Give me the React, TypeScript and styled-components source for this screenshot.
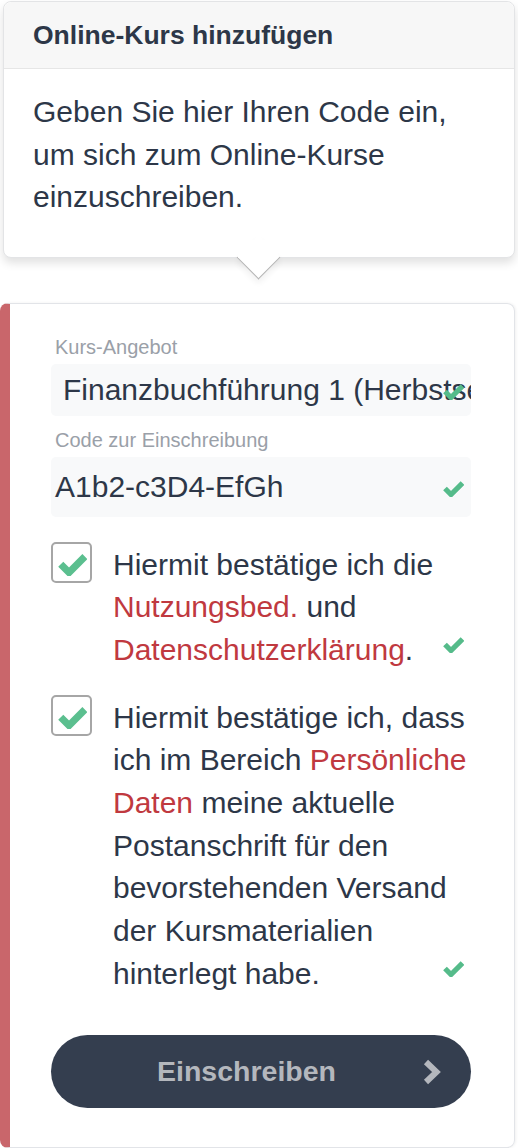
import React from 'react';
import styled, { createGlobalStyle } from 'styled-components';

const GlobalStyle = createGlobalStyle`
  html, body {
    margin: 0;
    padding: 0;
    background: #ffffff;
  }
  body {
    font-family: "Liberation Sans", Arial, Helvetica, sans-serif;
    color: #2d3748;
  }
`;

// thick check mark, as in the reference (butt ends, mitred corner)
const CheckMark: React.FC<{ className?: string }> = ({ className }) => (
  <svg className={className} viewBox="0 0 21 18" fill="none" aria-hidden>
    <path
      d="M2 9.5 L8 15.5 L19.5 4"
      stroke="currentColor"
      strokeWidth={5.2}
      strokeLinecap="butt"
      strokeLinejoin="miter"
    />
  </svg>
);

const Chevron: React.FC<{ className?: string }> = ({ className }) => (
  <svg className={className} viewBox="0 0 22 26" fill="none" aria-hidden>
    <path
      d="M5 3 L15.5 13 L5 23"
      stroke="currentColor"
      strokeWidth={6}
      strokeLinecap="butt"
      strokeLinejoin="miter"
    />
  </svg>
);

const Page = styled.div`
  display: flex;
  flex-direction: column;
  width: 518px;
  height: 1148px;
  overflow: hidden;
  box-sizing: border-box;
  padding-top: 1px;
`;

const Popover = styled.div`
  position: relative;
  margin: 0 3px;
  border: 1px solid #e3e4e6;
  border-radius: 8px;
  background: #ffffff;
  box-shadow: 0 5px 10px rgba(0, 0, 0, 0.12);
`;

const PopoverHeader = styled.div`
  height: 66px;
  display: flex;
  align-items: center;
  padding-left: 29px;
  background: #f7f7f7;
  border-bottom: 1px solid #e6e6e6;
  border-radius: 8px 8px 0 0;
  font-size: 26.5px;
  font-weight: 700;
  color: #2d3748;
`;

const PopoverBody = styled.p`
  margin: 0;
  padding: 22px 60px 38px 29px;
  font-size: 30px;
  line-height: 42.5px;
  color: #2d3748;
`;

const Arrow = styled.div`
  position: absolute;
  left: 239px;
  bottom: -16px;
  width: 30px;
  height: 30px;
  background: #ffffff;
  border-right: 1px solid #b4b4b4;
  border-bottom: 1px solid #b4b4b4;
  transform: rotate(45deg);
  box-shadow: 3px 3px 6px rgba(0, 0, 0, 0.06);
`;

const ArrowCover = styled.div`
  position: absolute;
  left: 234px;
  bottom: -1px;
  width: 40px;
  height: 18px;
  background: #ffffff;
`;

const Card = styled.form`
  margin: 45px 3px 0 0;
  flex: 1;
  display: flex;
  flex-direction: column;
  border: 1px solid #e2e4e8;
  border-left: 10px solid #c9666b;
  border-radius: 8px;
  box-shadow: 1px 0 3px rgba(0, 0, 0, 0.06);
  padding: 31px 43px 0 41px;
`;

const Label = styled.label`
  display: block;
  padding-left: 4px;
  font-size: 20px;
  line-height: 24px;
  color: #9aa0a8;
  margin-bottom: 5px;
`;

const FieldBox = styled.div<{ $tall?: boolean }>`
  position: relative;
  display: flex;
  align-items: center;
  height: ${(p) => (p.$tall ? 60 : 52)}px;
  padding: 0 ${(p) => (p.$tall ? 4 : 12)}px;
  margin-bottom: 12px;
  background: #f8f9fa;
  border-radius: 5px;
  overflow: hidden;
  font-size: 30px;
  color: #2d3748;
  white-space: nowrap;
`;

const ValidIcon = styled(CheckMark)`
  position: absolute;
  right: 7px;
  top: 50%;
  margin-top: -8px;
  width: 21px;
  height: 18px;
  color: #55bb8a;
`;

const ConsentRow = styled.div`
  position: relative;
  display: flex;
  align-items: flex-start;
  gap: 21px;
  margin-top: 15px;
  margin-bottom: 10px;
`;

const CheckBox = styled.span`
  flex: none;
  display: flex;
  align-items: center;
  justify-content: center;
  box-sizing: border-box;
  width: 41px;
  height: 41px;
  margin-top: -2px;
  border: 2px solid #a6a6a6;
  border-radius: 5px;
  color: #5bbf8f;
`;

const BoxCheck = styled(CheckMark)`
  flex: none;
  width: 29px;
  height: 25px;
  margin: 3px 0 0 1px;
`;

const ConsentText = styled.p`
  flex: none;
  margin: 0;
  width: 362px;
  font-size: 30px;
  line-height: 42.7px;
  color: #2d3748;
`;

const TextLink = styled.a`
  color: #c0393f;
  text-decoration: none;
`;

const RowCheck = styled(CheckMark)`
  position: absolute;
  right: 7px;
  bottom: 19px;
  width: 21px;
  height: 18px;
  color: #55bb8a;
`;

const SubmitButton = styled.button`
  margin-top: 29px;
  height: 73px;
  width: 100%;
  border: none;
  border-radius: 37px;
  background: #343e4f;
  color: #b4b7bd;
  font-family: inherit;
  font-size: 28.5px;
  font-weight: 700;
  display: grid;
  grid-template-columns: 1fr auto;
  align-items: center;
  padding: 0 28px 0 21px;
`;

const ButtonChevron = styled(Chevron)`
  width: 22px;
  height: 26px;
  margin-top: 2px;
`;

export default function App() {
  return (
    <Page>
      <GlobalStyle />
      <Popover>
        <PopoverHeader>Online-Kurs hinzufügen</PopoverHeader>
        <PopoverBody>
          Geben Sie hier Ihren Code ein, um sich zum Online-Kurse einzuschreiben.
        </PopoverBody>
        <Arrow />
        <ArrowCover />
      </Popover>

      <Card onSubmit={(e) => e.preventDefault()}>
        <Label>Kurs-Angebot</Label>
        <FieldBox>
          Finanzbuchführung 1 (Herbstsemester)
          <ValidIcon />
        </FieldBox>

        <Label>Code zur Einschreibung</Label>
        <FieldBox $tall>
          A1b2-c3D4-EfGh
          <ValidIcon />
        </FieldBox>

        <ConsentRow>
          <CheckBox>
            <BoxCheck />
          </CheckBox>
          <ConsentText>
            Hiermit bestätige ich die <TextLink href="#">Nutzungsbed.</TextLink> und{' '}
            <TextLink href="#">Datenschutzerklärung</TextLink>.
          </ConsentText>
          <RowCheck />
        </ConsentRow>

        <ConsentRow>
          <CheckBox>
            <BoxCheck />
          </CheckBox>
          <ConsentText>
            Hiermit bestätige ich, dass ich im Bereich{' '}
            <TextLink href="#">Persönliche Daten</TextLink> meine aktuelle Postanschrift für den
            bevorstehenden Versand der Kursmaterialien hinterlegt habe.
          </ConsentText>
          <RowCheck />
        </ConsentRow>

        <SubmitButton type="submit">
          <span>Einschreiben</span>
          <ButtonChevron />
        </SubmitButton>
      </Card>
    </Page>
  );
}
